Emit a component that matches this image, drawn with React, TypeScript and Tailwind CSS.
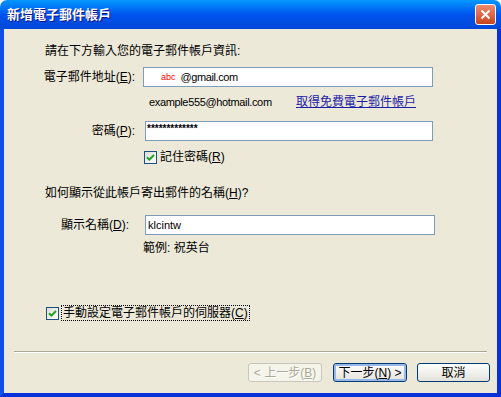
import React from "react";

function Mn({ k }: { k: string }) {
  return (
    <>
      (<span className="underline">{k}</span>)
    </>
  );
}

function Check() {
  return (
    <span className="flex h-[13px] w-[13px] shrink-0 items-center justify-center border border-[#1c5180] bg-linear-to-br from-[#dcdcd7] to-white">
      <svg width="9" height="9" viewBox="0 0 9 9">
        <path d="M1 4.2 L3.4 6.6 L8 2" stroke="#21a121" strokeWidth="2" fill="none" />
      </svg>
    </span>
  );
}

export default function App() {
  return (
    <div className="flex h-[397px] w-[501px] flex-col bg-white font-['Liberation_Sans','Noto_Sans_CJK_TC',sans-serif] text-[12px] leading-[14px] text-black">
      {/* title bar */}
      <div className="flex h-[29px] shrink-0 items-center justify-between rounded-t-[7px] bg-linear-to-b from-[#0997ff] via-[#0053ee] to-[#0047d8] pl-[7px] pr-[5px]">
        <span className="text-[13px] font-bold text-white [text-shadow:1px_1px_0_#0f1089]">
          新增電子郵件帳戶
        </span>
        <span className="flex h-[21px] w-[21px] items-center justify-center rounded-[3px] border border-white bg-linear-to-b from-[#f08a6c] to-[#c8431c]">
          <svg width="11" height="11" viewBox="0 0 11 11">
            <path d="M1.5 1.5 L9.5 9.5 M9.5 1.5 L1.5 9.5" stroke="white" strokeWidth="2" />
          </svg>
        </span>
      </div>

      {/* body */}
      <div className="flex flex-1 flex-col border-x-4 border-b-4 border-l-[#0d50e6] border-r-[#0831d9] border-b-[#0831d9] bg-[#ece9d8]">
        <div className="ml-[41px] mt-[15px] h-[14px]">請在下方輸入您的電子郵件帳戶資訊:</div>

        <div className="mt-[9px] flex h-[20px] items-center">
          <div className="w-[131px] text-right">
            電子郵件地址<Mn k="E" />:
          </div>
          <div className="ml-[8px] flex h-[20px] w-[290px] items-center border border-[#7f9db9] bg-white pl-[17px]">
            <span className="text-[9px] text-[#ff0000]">abc</span>
            <span className="ml-[5px] text-[11px] tracking-[-0.4px]">@gmail.com</span>
          </div>
        </div>

        <div className="ml-[145px] mt-[8px] flex h-[14px] items-center">
          <span className="w-[147px] text-[11px] tracking-[-0.35px]">example555@hotmail.com</span>
          <a className="text-[#1c1ca8] underline">取得免費電子郵件帳戶</a>
        </div>

        <div className="mt-[12px] flex h-[20px] items-center">
          <div className="w-[131px] text-right">
            密碼<Mn k="P" />:
          </div>
          <div className="ml-[10px] flex h-[20px] w-[288px] items-start border border-[#7f9db9] bg-white pl-[1px] pt-[2px]">
            <span className="text-[10px] font-bold leading-[10px]">*************</span>
          </div>
        </div>

        <div className="ml-[140px] mt-[9px] flex h-[14px] items-center gap-[3px]">
          <Check />
          <span>
            記住密碼<Mn k="R" />
          </span>
        </div>

        <div className="ml-[41px] mt-[22px] h-[14px]">
          如何顯示從此帳戶寄出郵件的名稱<Mn k="H" />?
        </div>

        <div className="mt-[15px] flex h-[20px] items-center">
          <div className="w-[125px] text-right">
            顯示名稱<Mn k="D" />:
          </div>
          <div className="ml-[16px] flex h-[20px] w-[290px] items-center border border-[#7f9db9] bg-white pl-[2px]">
            <span className="text-[11px]">klcintw</span>
          </div>
        </div>

        <div className="ml-[139px] mt-[6px] h-[14px]">範例: 祝英台</div>

        <div className="ml-[42px] mt-[51px] flex h-[14px] items-center gap-[2px]">
          <Check />
          <span className="border border-dotted border-black px-[1px] leading-[14px]">
            手動設定電子郵件帳戶的伺服器<Mn k="C" />
          </span>
        </div>

        <div className="mx-[10px] mt-[31px] h-[2px] border-t border-b border-t-[#aca899] border-b-white" />

        <div className="ml-[244px] mt-[10px] flex h-[19px] items-center">
          <div className="flex h-[19px] w-[74px] items-center justify-center rounded-[3px] border border-[#c9c7ba] bg-[#f5f4ea] text-[#aca899] [text-shadow:1px_1px_0_#fff]">
            &lt; 上一步<Mn k="B" />
          </div>
          <div className="ml-[11px] flex h-[19px] w-[74px] items-center justify-center rounded-[3px] border border-[#003c74] bg-linear-to-b from-white to-[#e3e2da] shadow-[inset_0_0_0_2px_#98b8ea]">
            下一步<Mn k="N" /> &gt;
          </div>
          <div className="ml-[10px] flex h-[19px] w-[73px] items-center justify-center rounded-[3px] border border-[#003c74] bg-linear-to-b from-white to-[#e3e2da]">
            取消
          </div>
        </div>
      </div>
    </div>
  );
}
